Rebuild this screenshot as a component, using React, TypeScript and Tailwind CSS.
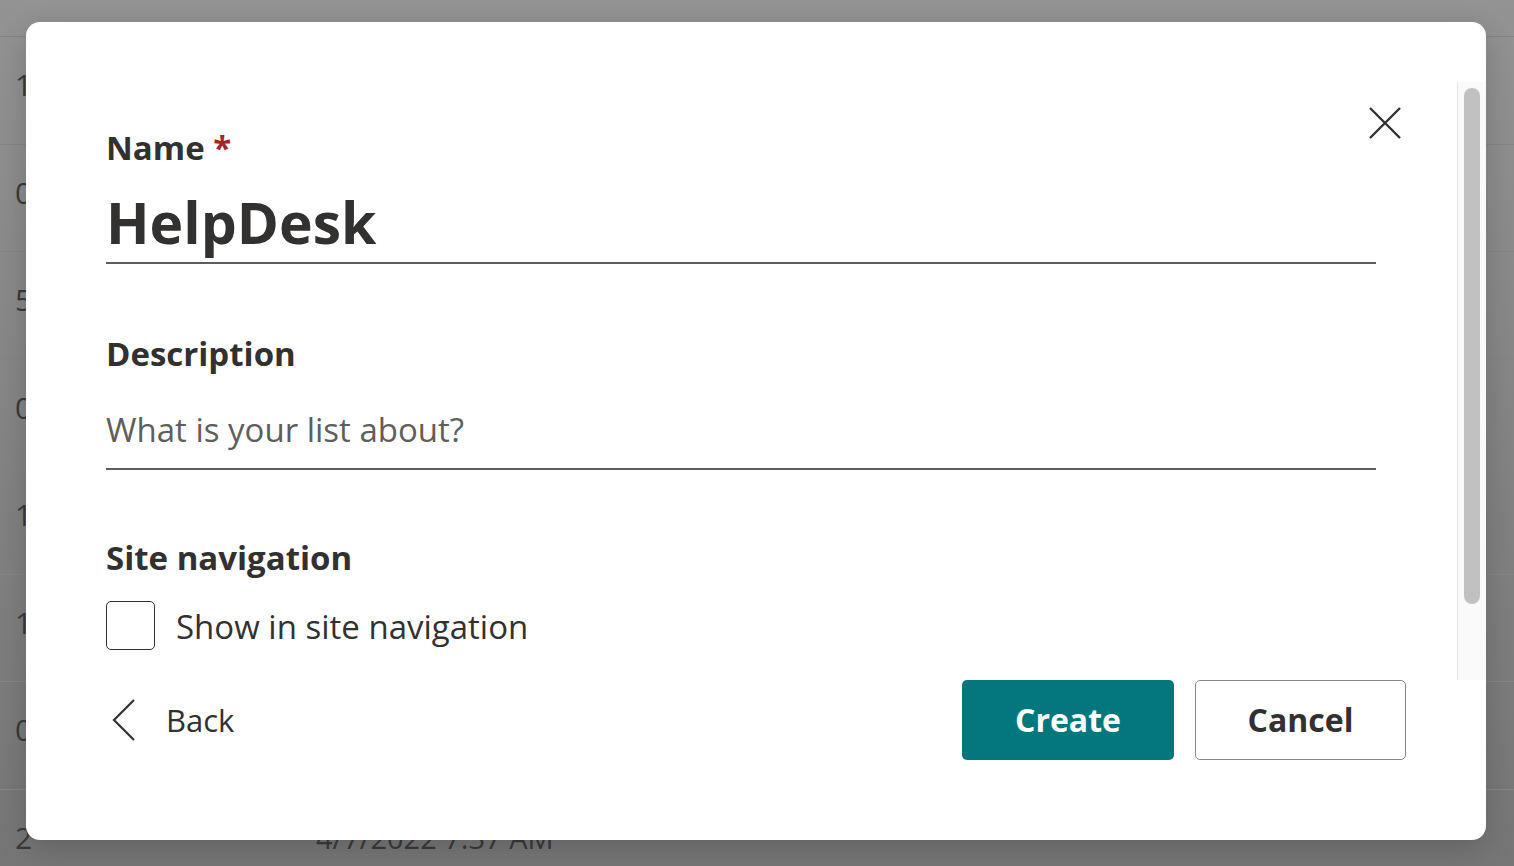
import React from "react";

const rows = ["1", "0", "5", "0", "1", "1", "0", "2"];

function CloseIcon() {
  return (
    <svg width="32" height="32" viewBox="0 0 32 32" fill="none">
      <path d="M1 1L31 31M31 1L1 31" stroke="#323130" strokeWidth="2.4" />
    </svg>
  );
}

function ChevronLeft() {
  return (
    <svg width="26" height="44" viewBox="0 0 26 44" fill="none">
      <path d="M23 2L3 22L23 42" stroke="#323130" strokeWidth="2.2" />
    </svg>
  );
}

export default function App() {
  return (
    <div
      className="relative w-[1514px] h-[866px] overflow-hidden bg-gradient-to-b from-[#939393] to-[#767676]"
      style={{ fontFamily: '"Open Sans", "Noto Sans", sans-serif' }}
    >
      {/* page behind the overlay */}
      <div className="flex flex-col pt-[36px] text-[#3a3a3a]">
        {rows.map((r, i) => (
          <div
            key={i}
            className="h-[107.5px] border-t border-[#858585] flex items-start pt-[28px] pl-[15px] text-[30px] leading-[40px]"
          >
            <span className="w-[301px]">{r}</span>
            {i === rows.length - 1 && <span className="text-[29px]">4/7/2022 7:37 AM</span>}
          </div>
        ))}
      </div>

      {/* dialog */}
      <div className="absolute left-[26px] top-[22px] w-[1460px] h-[818px] bg-white rounded-[14px] shadow-[0_8px_30px_rgba(0,0,0,0.18)] flex flex-col text-[#323130]">
        <div className="mt-[60px] h-[598px] flex">
          <div className="relative flex-1 pl-[80px] pr-[81px] pt-[45px]">
            <button className="absolute right-[56px] top-[25px]">
              <CloseIcon />
            </button>

            <div className="h-[42px] leading-[42px] text-[33px] font-bold">
              Name <span className="text-[#a4262c]">*</span>
            </div>
            <div className="h-[95px] pt-[13px] border-b-2 border-[#605e5c]">
              <div className="h-[80px] leading-[80px] text-[57px] font-bold">HelpDesk</div>
            </div>

            <div className="mt-[69px] h-[42px] leading-[42px] text-[33px] font-bold">Description</div>
            <div className="h-[95px] pt-[30px] border-b-2 border-[#605e5c]">
              <div className="h-[50px] leading-[50px] text-[33px] text-[#605e5c]">What is your list about?</div>
            </div>

            <div className="mt-[67px] h-[42px] leading-[42px] text-[33px] font-bold">Site navigation</div>
            <div className="mt-[20px] flex items-center gap-[21px]">
              <div className="w-[49px] h-[49px] rounded-[5px] border-[1.5px] border-[#323130]" />
              <span className="text-[33px] leading-[48px] mt-[4px]">Show in site navigation</span>
            </div>
          </div>

          {/* scrollbar */}
          <div className="w-[29px] h-full bg-[#fafafa] border-l border-[#e6e6e6] pt-[6px] pl-[6px]">
            <div className="w-[16px] h-[516px] rounded-full bg-[#c1c1c1]" />
          </div>
        </div>

        <div className="flex items-start justify-between pl-[85px] pr-[80px]">
          <button className="flex items-center gap-[29px] h-[80px]">
            <ChevronLeft />
            <span className="text-[31px]">Back</span>
          </button>
          <div className="flex gap-[21px]">
            <button className="w-[212px] h-[80px] rounded-[5px] bg-[#03787c] text-white text-[32px] font-bold">
              Create
            </button>
            <button className="w-[211px] h-[80px] rounded-[5px] border-[1.5px] border-[#8a8886] bg-white text-[32px] font-bold">
              Cancel
            </button>
          </div>
        </div>
      </div>
    </div>
  );
}
